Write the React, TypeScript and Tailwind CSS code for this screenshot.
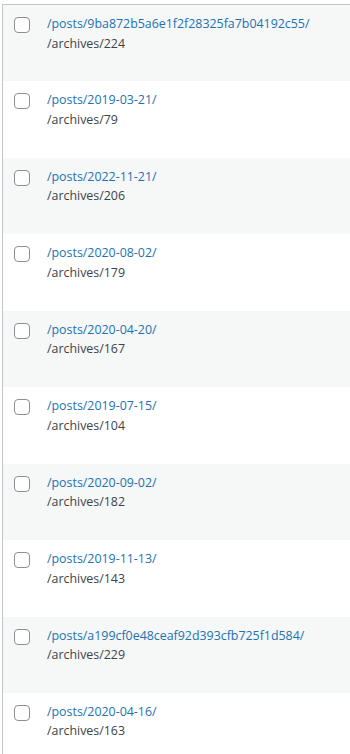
import React from 'react';

const rows = [
  { post: '/posts/9ba872b5a6e1f2f28325fa7b04192c55/', archive: '/archives/224' },
  { post: '/posts/2019-03-21/', archive: '/archives/79' },
  { post: '/posts/2022-11-21/', archive: '/archives/206' },
  { post: '/posts/2020-08-02/', archive: '/archives/179' },
  { post: '/posts/2020-04-20/', archive: '/archives/167' },
  { post: '/posts/2019-07-15/', archive: '/archives/104' },
  { post: '/posts/2020-09-02/', archive: '/archives/182' },
  { post: '/posts/2019-11-13/', archive: '/archives/143' },
  { post: '/posts/a199cf0e48ceaf92d393cfb725f1d584/', archive: '/archives/229' },
  { post: '/posts/2020-04-16/', archive: '/archives/163' },
];

const App = () => {
  return (
    <div className="h-[754px] overflow-hidden bg-white pl-[2px] pt-[4px] font-['Open_Sans',sans-serif] text-[12.4px]">
      <div className="border-l border-t border-[#c3c4c7]">
        {rows.map((row, i) => (
          <div
            key={i}
            className={`flex h-[76.45px] items-start pl-[11px] pt-[12px] ${i % 2 === 0 ? 'bg-[#f6f7f7]' : 'bg-white'}`}
          >
            <span className="h-4 w-4 shrink-0 rounded-[4px] border border-[#8c8f94] bg-white" />
            <div className="-mt-[3px] ml-[17px] leading-[19.5px]">
              <a className="block text-[#2271b1]">{row.post}</a>
              <div className="text-[#3c434a]">{row.archive}</div>
            </div>
          </div>
        ))}
      </div>
    </div>
  );
};

export default App;
